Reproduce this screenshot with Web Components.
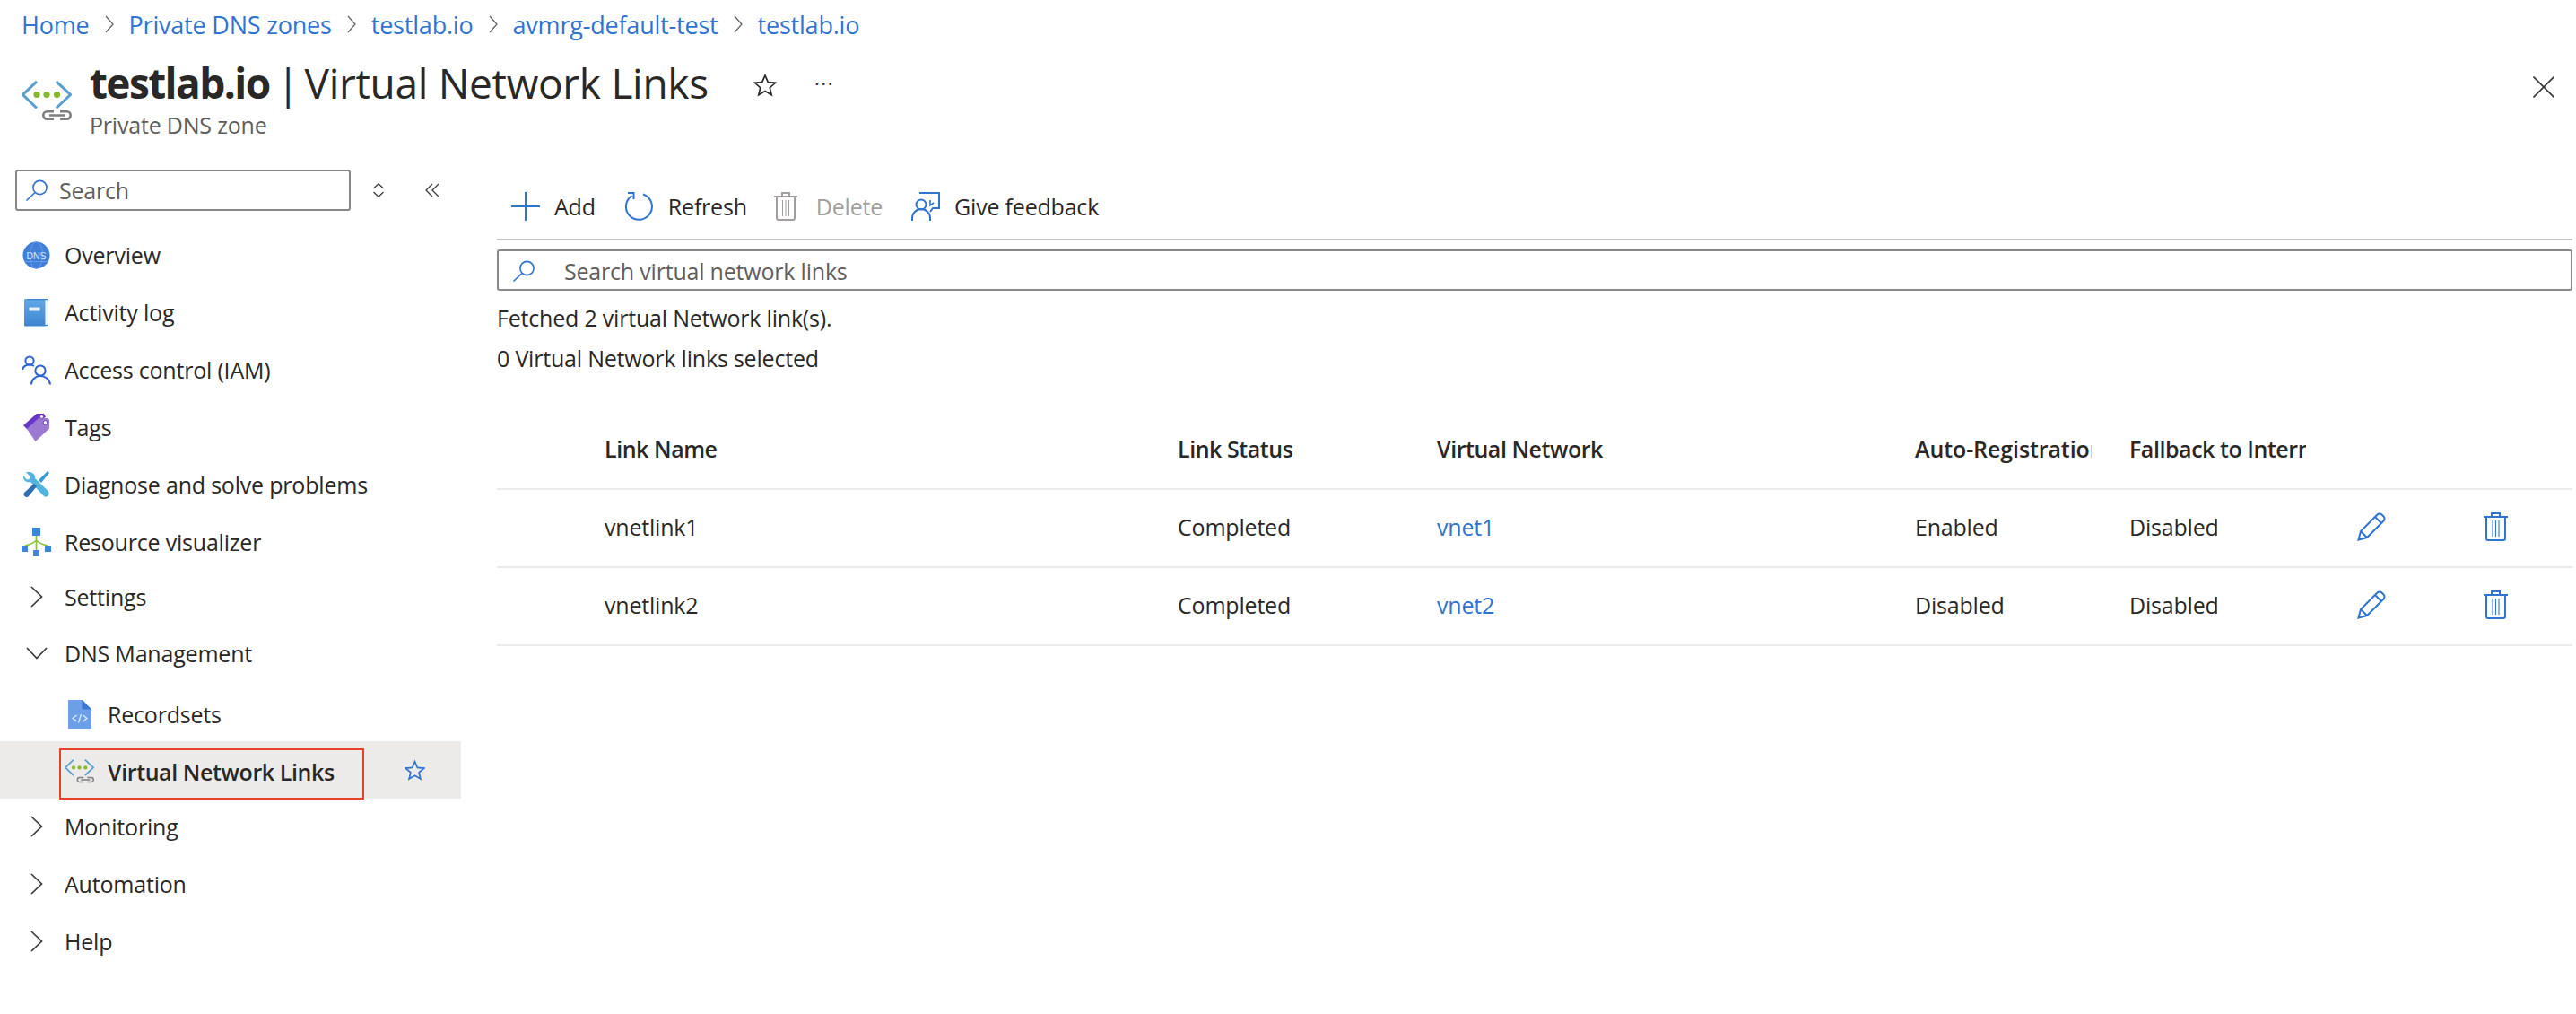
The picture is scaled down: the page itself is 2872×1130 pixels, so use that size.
<!DOCTYPE html>
<html lang="en">
<head>
<meta charset="utf-8">
<title>testlab.io | Virtual Network Links</title>
<style>
  html, body { margin: 0; padding: 0; background: #fff; }
  body {
    width: 2872px;
    height: 1130px;
    overflow: hidden;
    font-family: "Open Sans", "Noto Sans", sans-serif;
    font-size: 25px;
    letter-spacing: -0.2px;
    color: #292827;
  }
  .layout { display: flex; }
</style>
</head>
<body>
  <az-breadcrumb>
    <a>Home</a><a>Private DNS zones</a><a>testlab.io</a><a>avmrg-default-test</a><a>testlab.io</a>
  </az-breadcrumb>
  <az-header></az-header>
  <div class="layout">
    <az-sidebar>
      <nav-item icon="dns" h="64">Overview</nav-item>
      <nav-item icon="book" h="64">Activity log</nav-item>
      <nav-item icon="people" h="64">Access control (IAM)</nav-item>
      <nav-item icon="tags" h="64">Tags</nav-item>
      <nav-item icon="tools" h="64">Diagnose and solve problems</nav-item>
      <nav-item icon="tree" h="64">Resource visualizer</nav-item>
      <nav-item icon="right" h="58">Settings</nav-item>
      <nav-item icon="down" h="68">DNS Management</nav-item>
      <nav-item icon="doc" h="64" sub>Recordsets</nav-item>
      <nav-item icon="vnl" h="64" sub selected>Virtual Network Links</nav-item>
      <nav-item icon="right" h="62">Monitoring</nav-item>
      <nav-item icon="right" h="66">Automation</nav-item>
      <nav-item icon="right" h="62">Help</nav-item>
    </az-sidebar>
    <az-main></az-main>
  </div>

<script>
const BLUE = '#2f74d0';

const vnlArt = `<path d="M17 .8 1.500 15.500 17 30.500M38.700 .8 54.500 15.500 38.700 30.500" fill="none" stroke="#59a0cf" stroke-width="3"/><circle cx="17" cy="15.500" r="3.600" fill="#86b92f"/><circle cx="28" cy="15.500" r="3.600" fill="#86b92f"/><circle cx="39.500" cy="15.500" r="3.600" fill="#86b92f"/><path d="M36 34.300h-7.500a4.200 4.200 0 0 0 0 8.400H36M43 34.300h7.500a4.200 4.200 0 0 1 0 8.400H43M31 38.500h17" fill="none" stroke="#7f7f7f" stroke-width="2.600"/>`;

// all icons are drawn at their real pixel size
const ICONS = {
  search: `<svg width="26" height="24" viewBox="0 0 26 24" fill="none" stroke="${BLUE}" stroke-width="1.6"><circle cx="16.5" cy="9" r="7.6"/><path d="M11 14.5 1.5 23.5"/></svg>`,
  plus: `<svg width="32" height="32" viewBox="0 0 32 32" fill="none" stroke="${BLUE}" stroke-width="2"><path d="M16 0v32M0 16h32"/></svg>`,
  refresh: `<svg width="33" height="32" viewBox="0 0 33 32" fill="none" stroke="${BLUE}" stroke-width="2"><path d="M21 2.500a14.500 14.500 0 1 1-12.500 1.600"/><path d="M4 1h6.500v7"/></svg>`,
  trashGrey: `<svg style="margin-right:5px" width="26" height="32" viewBox="0 0 26 32" fill="none" stroke="#a19f9d" stroke-width="2"><path d="M0 5h26M9 5V1h8v4M3 5v24a2 2 0 0 0 2 2h16a2 2 0 0 0 2-2V5"/><path stroke-width="1" d="M9.500 9v18M13 9v18M16.500 9v18"/></svg>`,
  trash: `<svg width="27" height="32" viewBox="0 0 27 32" fill="none" stroke="${BLUE}" stroke-width="2"><path d="M0 5h27M9 5V1h9v4M3 5v24a2 2 0 0 0 2 2h17a2 2 0 0 0 2-2V5"/><path stroke-width="1.100" d="M10 9v18M13.500 9v18M17 9v18"/></svg>`,
  pencil: `<svg width="32" height="32" viewBox="0 0 32 32" fill="none" stroke="${BLUE}" stroke-width="2"><path d="M1.500 30.500 4 21 22.500 2.500a3.500 3.500 0 0 1 5 0l2 2a3.500 3.500 0 0 1 0 5L11 28zM4 21l7 7M20 5l7 7"/></svg>`,
  feedback: `<svg width="32" height="32" viewBox="0 0 32 32" fill="none" stroke="${BLUE}" stroke-width="2"><path d="M9 1h22v17h-7l-3 4"/><circle cx="11" cy="14" r="5.500"/><path d="M1 32v-3a10 10 0 0 1 20 0v3"/><path stroke-width="1.600" d="M21 9v6l4-3"/></svg>`,
  star: `<svg width="26" height="26" viewBox="0 0 26 26" fill="none" stroke="#292827" stroke-width="1.700"><path d="M13 2l3.300 7.600 8.200.7-6.200 5.400 1.900 8L13 19.500l-7.200 4.200 1.900-8L1.500 10.300l8.200-.7z"/></svg>`,
  starBlue: `<svg width="23" height="23" viewBox="0 0 26 26" fill="none" stroke="${BLUE}" stroke-width="2"><path d="M13 2l3.300 7.600 8.200.7-6.200 5.400 1.900 8L13 19.500l-7.200 4.200 1.900-8L1.500 10.300l8.200-.7z"/></svg>`,
  close: `<svg width="24" height="24" viewBox="0 0 24 24" fill="none" stroke="#3b3a39" stroke-width="1.700"><path d="M.5.500l23 23M23.500.500l-23 23"/></svg>`,
  updown: `<svg width="14" height="16" viewBox="0 0 14 16" fill="none" stroke="#3b3a39" stroke-width="1.300"><path d="M1.500 6 7 .8 12.500 6M1.500 10 7 15.200 12.500 10"/></svg>`,
  collapse: `<svg width="16" height="16" viewBox="0 0 16 16" fill="none" stroke="#3b3a39" stroke-width="1.300"><path d="M8 1 1 8l7 7M15 1 8 8l7 7"/></svg>`,
  right: `<svg width="14" height="24" viewBox="0 0 14 24" fill="none" stroke="#3b3a39" stroke-width="1.700"><path d="M1 1l11.500 11L1 23"/></svg>`,
  down: `<svg width="24" height="14" viewBox="0 0 24 14" fill="none" stroke="#3b3a39" stroke-width="1.700"><path d="M1 1l11 11.500L23 1"/></svg>`,
  vnlLarge: `<svg width="56" height="45" viewBox="0 0 56 45">${vnlArt}</svg>`,
  vnl: `<svg width="33" height="27" viewBox="0 0 56 45">${vnlArt}</svg>`,
  dns: `<svg width="31" height="31" viewBox="0 0 31 31"><circle cx="15.500" cy="15.500" r="15" fill="#3f7fd9"/><g fill="none" stroke="#6fa2e6" stroke-width=".8"><ellipse cx="15.500" cy="15.500" rx="7" ry="15"/><path d="M2 8.500h27M2 22.500h27"/></g><text x="15.500" y="19.500" text-anchor="middle" font-family="Liberation Sans, sans-serif" font-size="10.500" letter-spacing="0" fill="#d8e7fb">DNS</text></svg>`,
  book: `<svg width="27" height="31" viewBox="0 0 27 31"><defs><linearGradient id="b" x1="0" y1="0" x2="0" y2="1"><stop offset="0" stop-color="#62a9e6"/><stop offset="1" stop-color="#3d85d2"/></linearGradient></defs><rect x="0" y="0" width="23.500" height="30.500" rx="1" fill="url(#b)"/><path d="M3 .6h22.500q1 0 1 1v27q0 1-1 1H23" fill="none" stroke="#3d85d2" stroke-width="1.200"/><rect x="5.500" y="9.500" width="12" height="4" fill="#e4f0fb"/></svg>`,
  people: `<svg width="33" height="33" viewBox="0 0 33 33" fill="none" stroke="#2b63d3" stroke-width="2"><circle cx="9" cy="6" r="4.600"/><path d="M1 16c1-4 4-5.500 8-5.500 2 0 3.500.5 5 1.500"/><circle cx="21" cy="17" r="5.600"/><path d="M11 32.500c0-5.500 4.500-9.500 10-9.500s10.500 4 11 9.500"/></svg>`,
  tags: `<svg width="29" height="31" viewBox="0 0 29 31"><path d="M0 13 15 0h8l2 4-8 3L5 18z" fill="#6a36c7"/><path d="M4 17 17 5h9q3 0 3 3v8.500L13.500 31z" fill="#9c7ad2"/><circle cx="20.500" cy="3.500" r="2" fill="#fff" stroke="#5a2bb0" stroke-width=".8"/><circle cx="24.500" cy="10" r="2.300" fill="#fff" stroke="#5a2bb0" stroke-width=".8"/></svg>`,
  tools: `<svg width="29" height="30" viewBox="0 0 29 30"><path d="M3 1.500l5 4.500-1 3-3.200.6L0 5C-.6 10 3.500 13 8 12l14 15q3 3.500 6 0 1.500-2.500-.5-5L13 8C13.500 3 9 0 3 1.500z" fill="#50b4dc"/><path d="M27 0l2 2-9 11-3-3z" fill="#3b9ad0"/><path d="M12 14l3 3-9 11q-2 2-4.500 0-2-2 0-4.500z" fill="#2f6fb3"/></svg>`,
  tree: `<svg width="33" height="32" viewBox="0 0 33 32"><path d="M16.500 8v19M4 20c4-1 9-2 12.500-6 3.500 4 8.500 5 12.500 6" fill="none" stroke="#8cc63f" stroke-width="1.800"/><g fill="#3f85dc"><rect x="12" y="0" width="9" height="9"/><rect x="0" y="20" width="7" height="7"/><rect x="26" y="20" width="7" height="7"/><rect x="13" y="25" width="7" height="7"/></g></svg>`,
  doc: `<svg width="26" height="32" viewBox="0 0 26 32"><path d="M1 0h15l10 10.500V31a1 1 0 0 1-1 1H1a1 1 0 0 1-1-1V1a1 1 0 0 1 1-1z" fill="#6b9fe8"/><path d="M15.500 0 26 10.500H17a1.500 1.500 0 0 1-1.500-1.500z" fill="#3a76d3"/><path d="M9.500 17 5 20.500l4.500 3.500M16.500 17l4.500 3.500-4.500 3.500M14.500 16l-3 9.500" fill="none" stroke="#e4eefc" stroke-width="1.200"/></svg>`
};

class AzBreadcrumb extends HTMLElement {
  constructor() {
    super();
    this.attachShadow({ mode: 'open' });
    this.shadowRoot.innerHTML = `
      <style>
        :host { display: flex; align-items: center; height: 54px; padding-left: 24px; color: ${BLUE}; font-size: 27px; }
        .sep { width: 10px; height: 20px; margin: 0 17px; flex: none; }
        a { color: inherit; }
      </style>
      <div id="items" style="display:flex;align-items:center"></div>
    `;
  }

  connectedCallback() {
    const box = this.shadowRoot.getElementById('items');
    const links = [...this.querySelectorAll('a')];
    links.forEach((link, i) => {
      const a = document.createElement('a');
      a.textContent = link.textContent;
      box.appendChild(a);
      if (i < links.length - 1) {
        box.insertAdjacentHTML('beforeend', `<svg class="sep" viewBox="0 0 10 20" fill="none" stroke="#605e5c" stroke-width="1.200"><path d="M1 1l8 9-8 9"/></svg>`);
      }
    });
  }
}

class AzHeader extends HTMLElement {
  constructor() {
    super();
    this.attachShadow({ mode: 'open' });
    this.shadowRoot.innerHTML = `
      <style>
        :host { display: flex; height: 111px; position: relative; }
        .logo { margin: 36px 20px 0 24px; }
        .titles { padding-top: 7px; }
        h1 { margin: 0; font-size: 46px; line-height: 62px; font-weight: 400; letter-spacing: -0.3px; white-space: nowrap; }
        b { font-weight: 700; letter-spacing: -1.6px; }
        .pipe { margin: 0 6px 0 8px; }
        .sub { font-size: 25px; line-height: 32px; color: #605e5c; }
        .star { margin: 27px 0 0 50px; }
        .more { margin: 27px 0 0 42px; font-size: 24px; line-height: 24px; letter-spacing: 1px; color: #3b3a39; }
        .close { margin: 28px 24px 0 auto; }
      </style>
      <div class="logo">${ICONS.vnlLarge}</div>
      <div class="titles">
        <h1><b>testlab.io</b><span class="pipe">|</span><span>Virtual Network Links</span></h1>
        <div class="sub">Private DNS zone</div>
      </div>
      <div class="star">${ICONS.star}</div>
      <div class="more">&middot;&middot;&middot;</div>
      <div class="close">${ICONS.close}</div>
    `;
  }
}

class AzSidebar extends HTMLElement {
  constructor() {
    super();
    this.attachShadow({ mode: 'open' });
    this.shadowRoot.innerHTML = `
      <style>
        :host { display: block; width: 514px; flex: none; padding-top: 24px; }
        .top { display: flex; align-items: center; height: 46px; margin-bottom: 17px; padding-left: 17px; }
        .box {
          box-sizing: border-box; width: 374px; height: 46px; display: flex; align-items: center;
          gap: 12px; padding: 0 0 1px 9px; border: 2px solid #8a8886; border-radius: 3px; color: #605e5c;
        }
        .updown { margin-left: 24px; display: flex; }
        .collapse { margin-left: 45px; display: flex; }
      </style>
      <div class="top">
        <div class="box">${ICONS.search}<span>Search</span></div>
        <div class="updown">${ICONS.updown}</div>
        <div class="collapse">${ICONS.collapse}</div>
      </div>
      <slot></slot>
    `;
  }
}

class NavItem extends HTMLElement {
  constructor() {
    super();
    this.attachShadow({ mode: 'open' });
  }

  connectedCallback() {
    const sub = this.hasAttribute('sub');
    const selected = this.hasAttribute('selected');
    this.shadowRoot.innerHTML = `
      <style>
        :host {
          display: flex; align-items: center; position: relative; box-sizing: border-box;
          height: ${this.getAttribute('h')}px;
          padding: ${sub ? '3px' : '0'} 0 0 ${sub ? 72 : 24}px;
          background: ${selected ? '#edebe9' : 'transparent'};
          font-weight: ${selected ? 600 : 400};
          letter-spacing: ${selected ? '-0.4px' : 'inherit'};
        }
        .icon { width: 33px; display: flex; justify-content: center; flex: none; margin-right: 15px; }
        .mark { position: absolute; left: 66px; top: 8px; width: 340px; height: 57px; box-sizing: border-box; border: 2px solid #e8412a; }
        .pin { position: absolute; left: 451px; top: 21px; display: flex; }
      </style>
      <div class="icon">${ICONS[this.getAttribute('icon')]}</div>
      <slot></slot>
      ${selected ? `<div class="mark"></div><div class="pin">${ICONS.starBlue}</div>` : ''}
    `;
  }
}

class ToolbarButton extends HTMLElement {
  constructor() {
    super();
    this.attachShadow({ mode: 'open' });
  }

  connectedCallback() {
    const off = this.hasAttribute('disabled');
    this.shadowRoot.innerHTML = `
      <style>
        :host { display: flex; align-items: center; gap: 16px; color: ${off ? '#a19f9d' : '#292827'}; margin-left: ${off ? '-2px' : '0'}; }
        .icon { display: flex; }
      </style>
      <div class="icon">${ICONS[this.getAttribute('icon')]}</div>
      <slot></slot>
    `;
  }
}

class AzMain extends HTMLElement {
  constructor() {
    super();
    this.attachShadow({ mode: 'open' });
    this.shadowRoot.innerHTML = `
      <style>
        :host { display: block; width: 2314px; margin-left: 40px; }
        .toolbar {
          display: flex; align-items: center; box-sizing: border-box; height: 103px;
          padding: 29px 0 0 16px; border-bottom: 2px solid #c8c6c4; gap: 32px;
        }
        .search {
          box-sizing: border-box; height: 46px; margin-top: 10px; display: flex; align-items: center;
          padding: 1px 0 0 15px; gap: 32px; border: 2px solid #8a8886; border-radius: 3px; color: #605e5c;
        }
        .search span { padding-top: 1px; }
        .line { line-height: 45px; }
        .first { margin-top: 8px; }
      </style>
      <div class="toolbar">
        <toolbar-button icon="plus">Add</toolbar-button>
        <toolbar-button icon="refresh">Refresh</toolbar-button>
        <toolbar-button icon="trashGrey" disabled>Delete</toolbar-button>
        <toolbar-button icon="feedback">Give feedback</toolbar-button>
      </div>
      <div class="search">${ICONS.search}<span>Search virtual network links</span></div>
      <div class="line first">Fetched 2 virtual Network link(s).</div>
      <div class="line">0 Virtual Network links selected</div>
      <links-table></links-table>
    `;
  }
}

class LinksTable extends HTMLElement {
  constructor() {
    super();
    this.attachShadow({ mode: 'open' });
    const rows = [
      ['vnetlink1', 'Completed', 'vnet1', 'Enabled', 'Disabled'],
      ['vnetlink2', 'Completed', 'vnet2', 'Disabled', 'Disabled']
    ];
    const body = rows.map(r => `
      <div class="row">
        <span></span><span>${r[0]}</span><span>${r[1]}</span><span class="link">${r[2]}</span>
        <span>${r[3]}</span><span>${r[4]}</span>
        <span class="ic">${ICONS.pencil}</span><span class="ic">${ICONS.trash}</span>
      </div>`).join('');
    this.shadowRoot.innerHTML = `
      <style>
        :host { display: block; margin-top: 35px; }
        .row {
          display: grid; grid-template-columns: 120px 639px 289px 533px 239px 254px 141px 1fr;
          align-items: center; height: 87px; padding-bottom: 3px; box-sizing: border-box; border-bottom: 2px solid #edebe9;
        }
        .row > span { white-space: nowrap; overflow: hidden; }
        .head { font-weight: 600; height: 89px; padding-bottom: 2px; letter-spacing: -0.45px; }
        .head .clip { width: 197px; }
        .head .auto { letter-spacing: -0.1px; }
        .link { color: ${BLUE}; }
        .ic { display: flex; }
      </style>
      <div class="row head">
        <span></span><span>Link Name</span><span>Link Status</span><span>Virtual Network</span>
        <span class="clip auto">Auto-Registration</span><span class="clip">Fallback to Internet resolution</span>
        <span></span><span></span>
      </div>
      ${body}
    `;
  }
}

customElements.define('az-breadcrumb', AzBreadcrumb);
customElements.define('az-header', AzHeader);
customElements.define('az-sidebar', AzSidebar);
customElements.define('nav-item', NavItem);
customElements.define('toolbar-button', ToolbarButton);
customElements.define('links-table', LinksTable);
customElements.define('az-main', AzMain);
</script>
</body>
</html>
